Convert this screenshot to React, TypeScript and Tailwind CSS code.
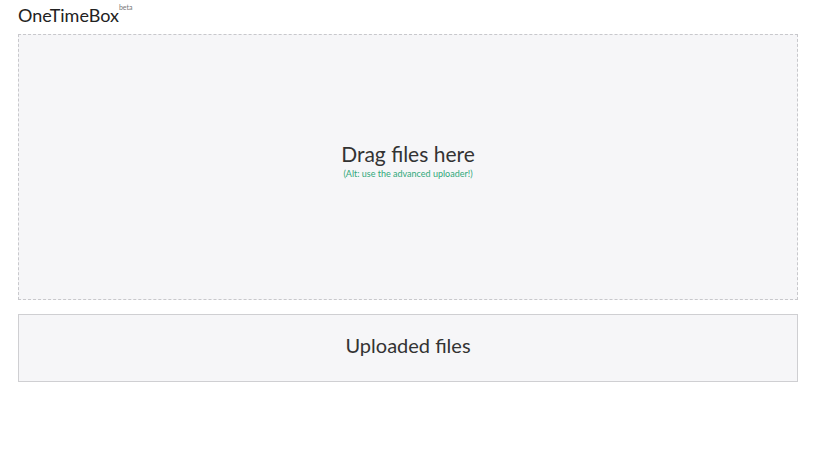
export default function App() {
  return (
    <div className="min-h-[460px] bg-white px-[18px] pt-[4px]" style={{ fontFamily: "Lato, 'Open Sans', sans-serif" }}>
      <div className="h-[26px] text-[18px] leading-[22px] text-[#222]">
        OneTimeBox<sup className="relative top-[3px] align-top text-[7px] text-[#777]">beta</sup>
      </div>
      <div className="mt-[4px] flex h-[266px] w-[780px] flex-col items-center justify-center border border-dashed border-[#c8c8cc] bg-[#f6f6f8] pb-[14px]">
        <div className="text-[21px] leading-[26px] text-[#333]">Drag files here</div>
        <div className="mt-[2px] text-[9px] leading-[10px] text-[#2fa87a]">(Alt: use the advanced uploader!)</div>
      </div>
      <div className="mt-[14px] flex h-[68px] w-[780px] items-center justify-center border border-[#cfcfd2] bg-[#f6f6f8] pb-[6px]">
        <div className="text-[20px] leading-[26px] text-[#333]">Uploaded files</div>
      </div>
    </div>
  );
}
